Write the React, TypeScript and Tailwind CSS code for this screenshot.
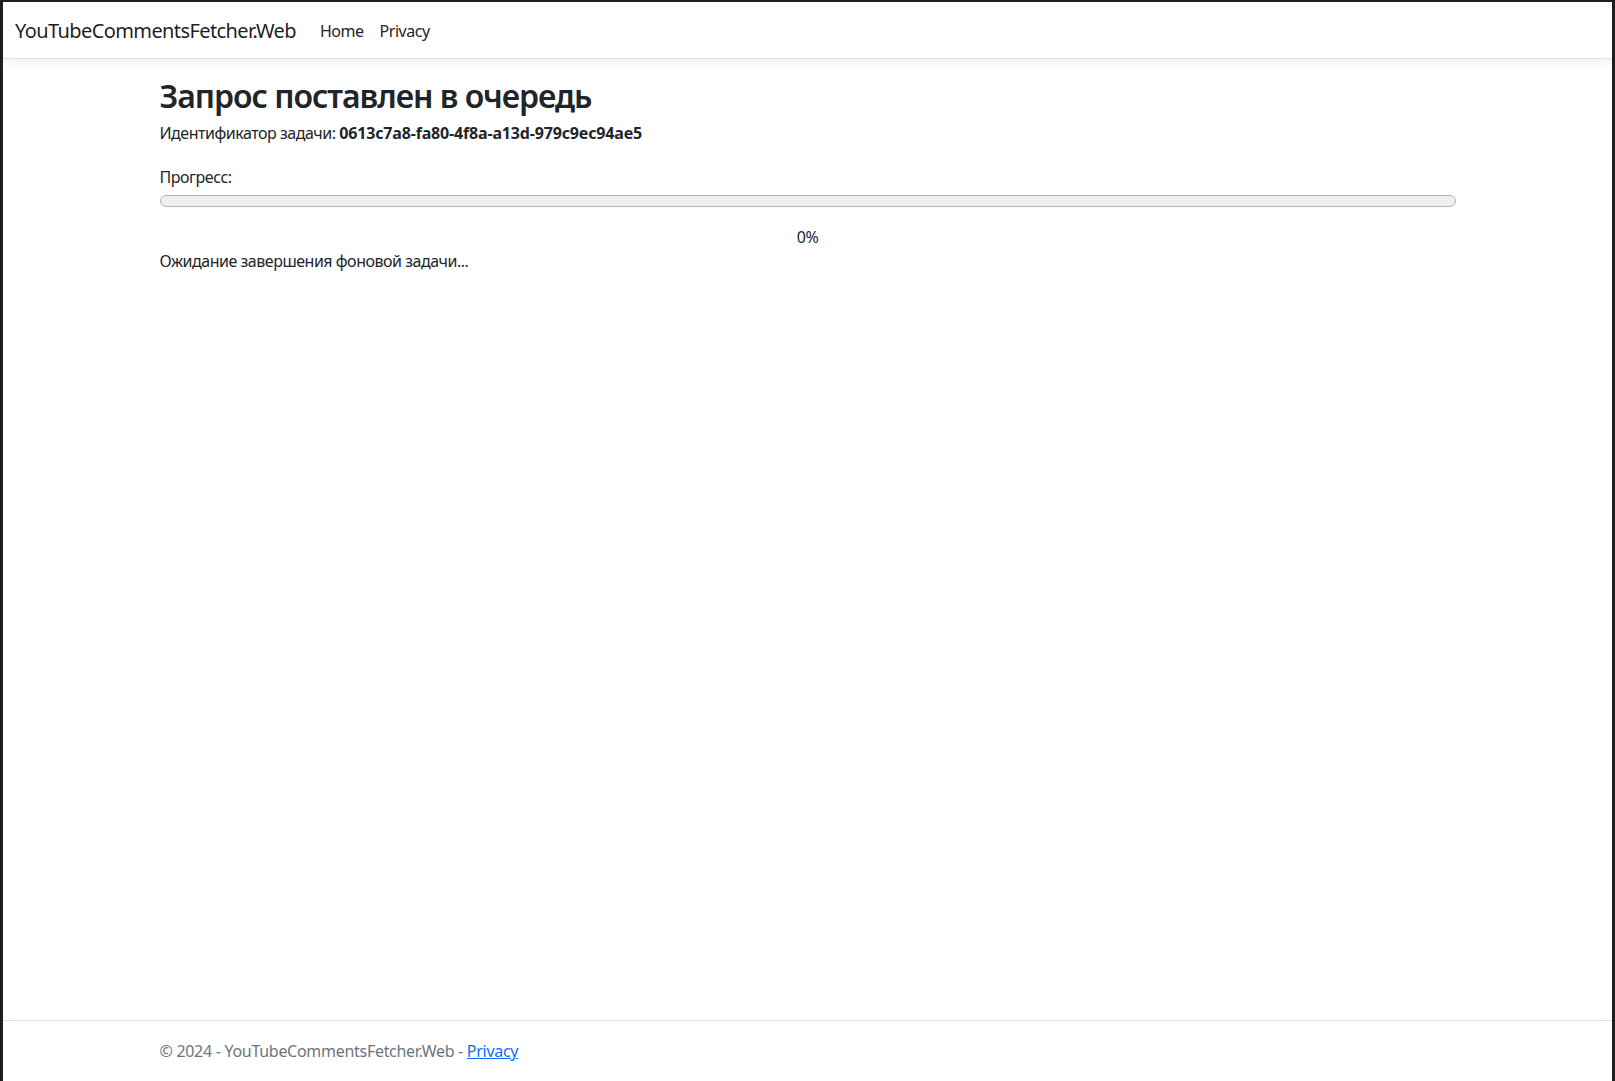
import React from 'react';

const font = { fontFamily: '"Noto Sans", "Open Sans", sans-serif' };

function NavBar() {
  return (
    <nav className="bg-white border-b border-[#dee2e6] shadow-[0_4px_12px_rgba(0,0,0,0.05)] relative z-10">
      <div className="flex items-center h-[56px] px-3 pt-[2px]">
        <span className="text-[20px] leading-[30px] text-[rgba(0,0,0,0.9)] mr-4 tracking-[-0.03em]">YouTubeCommentsFetcher.Web</span>
        <ul className="flex items-center tracking-[-0.03em]">
          <li><span className="px-2 text-[16px] leading-6 text-[#212529]">Home</span></li>
          <li><span className="px-2 text-[16px] leading-6 text-[#212529]">Privacy</span></li>
        </ul>
      </div>
    </nav>
  );
}

function ProgressSection({ percent }: { percent: number }) {
  return (
    <div className="pt-1">
      <div className="leading-6">Прогресс:</div>
      <div className="mt-[6px] h-[12px] rounded-full border border-[#b4b4b4] bg-[#efefef] overflow-hidden">
        <div className="h-full bg-[#0d6efd]" style={{ width: `${percent}%` }} />
      </div>
      <div className="mt-[18px] text-center leading-6">{percent}%</div>
      <div className="leading-6">Ожидание завершения фоновой задачи...</div>
    </div>
  );
}

export default function App() {
  return (
    <div className="h-[1081px] bg-[#1f1f1f] pt-[2px] px-[3px]" style={font}>
      <div className="h-full bg-white flex flex-col text-[#212529] text-[16px] tracking-[-0.03em]">
        <NavBar />
        <main className="flex-1 mt-4">
          <div className="max-w-[1320px] mx-auto px-3">
            <h2 className="text-[32px] leading-[1.2] font-semibold mt-[2px] mb-[6px] tracking-[-0.032em]">Запрос поставлен в очередь</h2>
            <p className="leading-6 mb-4">
              Идентификатор задачи: <strong className="font-bold tracking-[-0.01em]">0613c7a8-fa80-4f8a-a13d-979c9ec94ae5</strong>
            </p>
            <ProgressSection percent={0} />
          </div>
        </main>
        <footer className="border-t border-[#dee2e6] h-[61px] leading-[60px] whitespace-nowrap text-[#6c757d] tracking-[-0.018em]">
          <div className="max-w-[1320px] mx-auto px-3">
            © 2024 - YouTubeCommentsFetcher.Web - <a href="#" className="text-[#0d6efd] underline">Privacy</a>
          </div>
        </footer>
      </div>
    </div>
  );
}
